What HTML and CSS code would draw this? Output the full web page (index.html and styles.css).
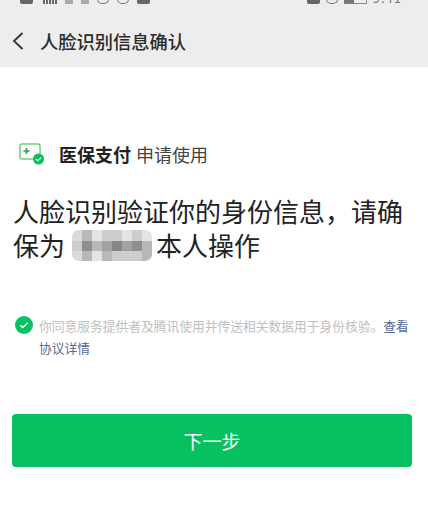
FILE: index.html
```html
<!DOCTYPE html>
<html lang="zh-CN">
<head>
    <meta charset="UTF-8">
    <meta name="viewport" content="width=device-width, initial-scale=1.0">
    <title>人脸识别信息确认</title>
    <link rel="stylesheet" href="styles.css">
</head>
<body>
    <div class="page">
        <div class="header">
            <div class="status-bar">
                <div class="status-left">
                    <span class="st-block"></span>
                    <span class="st-signal"></span>
                    <span class="st-dot"></span>
                    <span class="st-dot"></span>
                    <span class="st-ring"></span>
                    <span class="st-ring"></span>
                    <span class="st-block"></span>
                </div>
                <div class="status-right">
                    <span class="st-block"></span>
                    <span class="st-ring"></span>
                    <span class="st-battery"></span>
                    <span class="st-time">9:41</span>
                </div>
            </div>
            <div class="nav">
                <svg class="back" viewBox="0 0 12 18">
                    <path d="M10.5 1L2 9l8.5 8" fill="none" stroke="#333" stroke-width="1.8"/>
                </svg>
                <h1>人脸识别信息确认</h1>
            </div>
        </div>

        <div class="content">
            <div class="app-row">
                <svg class="app-icon" viewBox="0 0 26 22">
                    <rect x="1" y="1" width="20" height="15" rx="2" fill="none" stroke="#6fd17f" stroke-width="1.5"/>
                    <path d="M7.5 5v6M4.5 8h6" stroke="#2e9e4f" stroke-width="1.6"/>
                    <circle cx="19.5" cy="16" r="5.5" fill="#07c160"/>
                    <path d="M16.8 16l2 1.7 3.2-3" fill="none" stroke="#fff" stroke-width="1.2"/>
                </svg>
                <span class="app-name">医保支付</span>
                <span class="app-action">申请使用</span>
            </div>

            <div class="headline">
                <div class="line">人脸识别验证你的身份信息，请确</div>
                <div class="line">
                    <span>保为</span>
                    <div class="mask">
                        <i class="g1"></i><i class="g3"></i><i class="g0"></i><i class="g2"></i><i class="g2"></i><i class="g0"></i><i class="g2"></i><i class="g0"></i>
                        <i class="g2"></i><i class="g5"></i><i class="g3"></i><i class="g4"></i><i class="g6"></i><i class="g4"></i><i class="g5"></i><i class="g3"></i>
                        <i class="g1"></i><i class="g3"></i><i class="g0"></i><i class="g3"></i><i class="g2"></i><i class="g2"></i><i class="g2"></i><i class="g3"></i>
                    </div>
                    <span>本人操作</span>
                </div>
            </div>

            <div class="agree">
                <svg class="check" viewBox="0 0 18 18">
                    <circle cx="9" cy="9" r="9" fill="#07c160"/>
                    <path d="M5.2 9.2l2.6 2.4 5-4.8" fill="none" stroke="#fff" stroke-width="1.4"/>
                </svg>
                <p>你同意服务提供者及腾讯使用并传送相关数据用于身份核验。<a href="#">查看协议详情</a></p>
            </div>

            <button type="button">下一步</button>
        </div>
    </div>
</body>
</html>
```

FILE: styles.css
```css
* {
    margin: 0;
    padding: 0;
    box-sizing: border-box;
}

body {
    font-family: "Noto Sans CJK SC", "Noto Sans", sans-serif;
    background: #fff;
    color: #222;
}

.page {
    width: 428px;
    height: 528px;
    overflow: hidden;
}

.header {
    height: 67px;
    background: #ededed;
}

/* the top of the status bar is cut off in the shot, only the bottom 4px show */
.status-bar {
    height: 5px;
    display: flex;
    justify-content: space-between;
    overflow: hidden;
    padding: 0 26px 0 20px;
}

.status-left,
.status-right {
    display: flex;
    align-items: flex-end;
    height: 4px;
}

.status-left {
    gap: 8px;
}

.status-right {
    gap: 6px;
}

.st-block {
    width: 13px;
    height: 6px;
    background: #666;
    border-radius: 0 0 2px 2px;
}

.st-signal {
    width: 14px;
    height: 5px;
    margin-left: 2px;
    background: repeating-linear-gradient(90deg, #666 0 2px, transparent 2px 3px);
}

.st-dot {
    width: 8px;
    height: 4px;
    background: #aaa;
}

.st-ring {
    width: 12px;
    height: 6px;
    border: 1px solid #777;
    border-top: none;
    border-radius: 0 0 5px 5px;
}

.st-battery {
    width: 23px;
    height: 4px;
    border: 1px solid #888;
    border-top: none;
    border-left: 10px solid #777;
}

.st-time {
    font-size: 13px;
    line-height: 13px;
    letter-spacing: 1px;
    color: #777;
}

.nav {
    height: 62px;
    display: flex;
    align-items: center;
    padding: 10px 0 0 12px;
}

.back {
    width: 12px;
    height: 18px;
    margin-right: 16px;
}

h1 {
    font-size: 18.25px;
    font-weight: 500;
    color: #2b2b2b;
}

.content {
    padding: 0 16px 0 13px;
}

.app-row {
    display: flex;
    align-items: center;
    margin-top: 74px;
    height: 26px;
}

.app-icon {
    width: 26px;
    height: 22px;
    margin-left: 6px;
    margin-right: 14px;
}

.app-name {
    font-size: 18px;
    font-weight: 700;
    margin-right: 5px;
}

.app-action {
    font-size: 18px;
    color: #444;
}

.headline {
    margin-top: 27px;
    font-size: 26px;
    color: #222;
    white-space: nowrap;
}

.line {
    height: 34px;
    line-height: 34px;
    display: flex;
    align-items: center;
}

.mask {
    display: grid;
    grid-template-columns: repeat(8, 10px);
    grid-auto-rows: 10.5px;
    width: 80px;
    height: 31px;
    margin: 1px 4px 0 7px;
    border-radius: 7px;
    overflow: hidden;
}

.mask i {
    display: block;
    filter: blur(0.6px);
}

.g0 { background: #e4e4e4; }
.g1 { background: #dadada; }
.g2 { background: #cdcdcd; }
.g3 { background: #b8b8b8; }
.g4 { background: #a2a2a2; }
.g5 { background: #8f8f8f; }
.g6 { background: #868686; }

.agree {
    display: flex;
    margin-top: 53px;
    margin-left: 2px;
}

.check {
    width: 18px;
    height: 18px;
    flex-shrink: 0;
    margin-top: 1px;
    margin-right: 6px;
}

.agree p {
    font-size: 12.75px;
    line-height: 22px;
    color: #c0c0c0;
}

.agree a {
    color: #576b95;
    text-decoration: none;
}

button {
    display: block;
    width: 400px;
    height: 53px;
    margin: 55px 0 0 -1px;
    background: #07c160;
    color: #fff;
    border: none;
    border-radius: 4px;
    font-family: inherit;
    font-size: 19px;
}
```
